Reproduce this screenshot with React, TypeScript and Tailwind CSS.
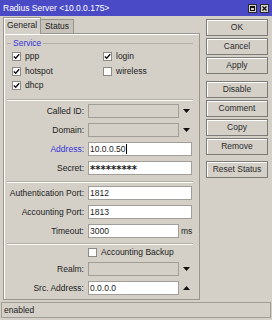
import React from "react";

const BLUE_TEXT = "text-[#3535d8]";

function Check({ checked }: { checked: boolean }) {
  return (
    <div className="flex h-[9px] w-[9px] shrink-0 items-center justify-center border border-[#8c8a85] bg-white">
      {checked && (
        <svg width="7" height="7" viewBox="0 0 7 7">
          <path d="M0.8 3.4 L2.7 5.3 L6.2 1.2" fill="none" stroke="#111" strokeWidth="1.4" />
        </svg>
      )}
    </div>
  );
}

function CheckItem({ label, checked }: { label: string; checked: boolean }) {
  return (
    <div className="flex h-[9px] items-center gap-[4px]">
      <Check checked={checked} />
      <span className="leading-none">{label}</span>
    </div>
  );
}

function Arrow({ up }: { up?: boolean }) {
  return (
    <svg width="7" height="4" viewBox="0 0 7 4" className="ml-[4px]">
      <polygon points={up ? "0,4 7,4 3.5,0" : "0,0 7,0 3.5,4"} fill="#111" />
    </svg>
  );
}

function Field({
  label,
  value,
  blue,
  disabled,
  width = 104,
  after,
  caret,
  secret,
}: {
  label: string;
  value?: string;
  blue?: boolean;
  disabled?: boolean;
  width?: number;
  after?: React.ReactNode;
  caret?: boolean;
  secret?: boolean;
}) {
  return (
    <div className="flex h-[14px] items-center">
      <div className={`w-[80px] text-right leading-none ${blue ? BLUE_TEXT : ""}`}>{label}</div>
      <div
        className={`ml-[4px] flex h-[14px] items-center border border-[#a19e97] pl-[1px] leading-none ${
          disabled ? "bg-[#d4d0c8]" : "bg-white"
        }`}
        style={{ width }}
      >
        {secret ? (
          <span className="pt-[3px] font-['DejaVu_Sans',sans-serif] text-[10px] font-bold leading-none">{value}</span>
        ) : (
          value
        )}
        {caret && <span className="ml-[1px] h-[10px] w-px bg-black" />}
      </div>
      {after}
    </div>
  );
}

function Separator() {
  return <div className="ml-[3px] mr-[6px] h-[2px] border-t border-[#b3afa7] border-b border-b-white" />;
}

function Button({ label, className = "" }: { label: string; className?: string }) {
  return (
    <div
      className={`flex h-[17px] items-center justify-center border border-[#7d7b77] bg-[#d4d0c8] leading-none text-[#2a2a2a] shadow-[inset_1px_1px_0_#fff] ${className}`}
    >
      {label}
    </div>
  );
}

export default function App() {
  return (
    <div className="flex h-[320px] w-[272px] flex-col overflow-hidden bg-[#d4d0c8] font-['Liberation_Sans',Arial,sans-serif] text-[8.5px] text-[#1c1c1c]">
      {/* title bar */}
      <div className="flex h-[16px] shrink-0 items-center bg-[#4a4ac6] pl-[3px] pr-[3px] text-white">
        <span className="leading-none">Radius Server &lt;10.0.0.175&gt;</span>
        <div className="ml-auto flex gap-[3px]">
          <div className="flex h-[9px] w-[9px] items-center justify-center border border-[#2a2a2a] bg-[#d4d0c8]">
            <div className="h-[5px] w-[5px] border border-[#111] border-t-2" />
          </div>
          <div className="flex h-[9px] w-[9px] items-center justify-center border border-[#2a2a2a] bg-[#d4d0c8]">
            <svg width="5" height="5" viewBox="0 0 5 5">
              <path d="M0.5 0.5 L4.5 4.5 M4.5 0.5 L0.5 4.5" stroke="#111" strokeWidth="1.3" />
            </svg>
          </div>
        </div>
      </div>

      <div className="flex flex-1">
        {/* left: tabs + panel */}
        <div className="ml-[3px] flex w-[197px] flex-col pt-[1px]">
          <div className="flex h-[16px] items-end">
            <div className="relative z-10 -mb-px flex h-[17px] w-[38px] items-center justify-center border border-b-0 border-[#9a968e] bg-[#d4d0c8] pb-[1px] leading-none shadow-[inset_1px_1px_0_#fff]">
              General
            </div>
            <div className="flex h-[14px] w-[33px] items-center justify-center border border-l-0 border-b-0 border-[#9a968e] bg-[#c6c2ba] leading-none">
              Status
            </div>
          </div>
          <div className="mb-[2px] flex flex-1 flex-col border border-[#9a968e] shadow-[inset_1px_1px_0_#fff]">
            {/* service group */}
            <div className="ml-[3px] mr-[6px] mt-[4px] flex h-[10px] items-center">
              <div className="h-px w-[4px] bg-[#b3afa7]" />
              <span className={`px-[2px] leading-none ${BLUE_TEXT}`}>Service</span>
              <div className="h-px flex-1 bg-[#b3afa7]" />
            </div>
            <div className="ml-[8px] mt-[4px] grid grid-cols-[91px_1fr] gap-y-[5.5px]">
              <CheckItem label="ppp" checked />
              <CheckItem label="login" checked />
              <CheckItem label="hotspot" checked />
              <CheckItem label="wireless" checked={false} />
              <CheckItem label="dhcp" checked />
            </div>
            <div className="mt-[9px]">
              <Separator />
            </div>

            <div className="mt-[3px] flex flex-col gap-[5px]">
              <Field label="Called ID:" disabled width={91} after={<Arrow />} />
              <Field label="Domain:" disabled width={91} after={<Arrow />} />
              <Field label="Address:" value="10.0.0.50" blue caret />
              <Field label="Secret:" value="*********" secret />
            </div>
            <div className="mt-[6px]">
              <Separator />
            </div>
            <div className="mt-[3px] flex flex-col gap-[5px]">
              <Field label="Authentication Port:" value="1812" />
              <Field label="Accounting Port:" value="1813" />
              <Field
                label="Timeout:"
                value="3000"
                width={91}
                after={<span className="ml-[2px] leading-none">ms</span>}
              />
            </div>
            <div className="mt-[5px]">
              <Separator />
            </div>
            <div className="ml-[84px] mt-[3px]">
              <CheckItem label="Accounting Backup" checked={false} />
            </div>
            <div className="mt-[5px] flex flex-col gap-[5px]">
              <Field label="Realm:" disabled width={91} after={<Arrow />} />
              <Field label="Src. Address:" value="0.0.0.0" width={91} after={<Arrow up />} />
            </div>
          </div>
        </div>

        {/* right: buttons */}
        <div className="ml-[6px] flex w-[62px] flex-col pt-[3px]">
          <Button label="OK" />
          <Button label="Cancel" className="mt-[2px]" />
          <Button label="Apply" className="mt-[2px]" />
          <Button label="Disable" className="mt-[7px]" />
          <Button label="Comment" className="mt-[2px]" />
          <Button label="Copy" className="mt-[2px]" />
          <Button label="Remove" className="mt-[2px]" />
          <Button label="Reset Status" className="mt-[6px]" />
        </div>
      </div>

      {/* status bar */}
      <div className="mb-[2px] ml-[1px] flex h-[16px] w-[270px] shrink-0 items-center border border-[#a19e97] pl-[2px] leading-none">
        enabled
      </div>
    </div>
  );
}
